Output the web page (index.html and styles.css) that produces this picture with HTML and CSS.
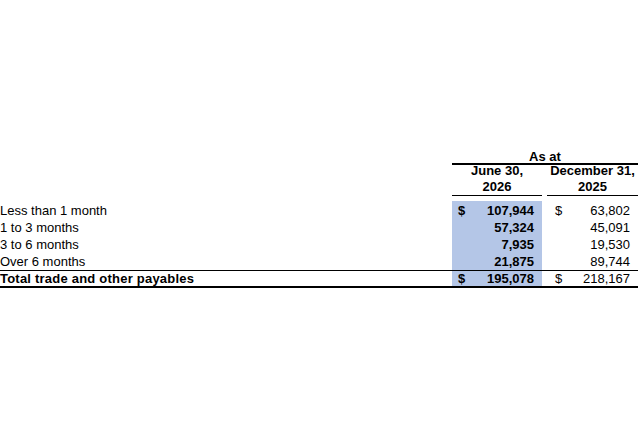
FILE: index.html
```html
<!DOCTYPE html>
<html lang="en">
<head>
<meta charset="utf-8">
<title>Trade and other payables aging</title>
<link rel="stylesheet" href="styles.css">
</head>
<body>
<main class="sheet">
  <div class="row head-top">
    <div class="asat">As at</div>
  </div>
  <div class="row head-cols">
    <div class="hcol june-h">June 30,<br>2026</div>
    <div class="hcol dec-h">December 31,<br>2025</div>
  </div>
  <div class="data">
    <div class="row item first">
      <div class="label">Less than 1 month</div>
      <div class="cell cur"><span class="sym">$</span><span class="num">107,944</span></div>
      <div class="cell prev"><span class="sym">$</span><span class="num">63,802</span></div>
    </div>
    <div class="row item">
      <div class="label">1 to 3 months</div>
      <div class="cell cur"><span class="num">57,324</span></div>
      <div class="cell prev"><span class="num">45,091</span></div>
    </div>
    <div class="row item">
      <div class="label">3 to 6 months</div>
      <div class="cell cur"><span class="num">7,935</span></div>
      <div class="cell prev"><span class="num">19,530</span></div>
    </div>
    <div class="row item">
      <div class="label">Over 6 months</div>
      <div class="cell cur"><span class="num">21,875</span></div>
      <div class="cell prev"><span class="num">89,744</span></div>
    </div>
    <div class="row item total">
      <div class="label">Total trade and other payables</div>
      <div class="cell cur"><span class="sym">$</span><span class="num">195,078</span></div>
      <div class="cell prev"><span class="sym">$</span><span class="num">218,167</span></div>
    </div>
  </div>
</main>
</body>
</html>
```
FILE: styles.css
```css
html, body {
  margin: 0;
  padding: 0;
  background: #ffffff;
}

body {
  font-family: "Liberation Sans", Arial, sans-serif;
  font-size: 13px;
  color: #000000;
}

.sheet {
  width: 638px;
  padding-top: 150px;
}

.row {
  display: grid;
  grid-template-columns: 452px 90px 5px 91px;
}

.head-top {
  height: 13px;
  line-height: 13px;
}

.asat {
  grid-column: 2 / 5;
  text-align: center;
  font-weight: bold;
  border-bottom: 2px solid #000;
}

.head-cols {
  margin-bottom: 5px;
}

.hcol {
  text-align: center;
  font-weight: bold;
  line-height: 16px;
  border-bottom: 1px solid #000;
}

.june-h {
  grid-column: 2;
}

.dec-h {
  grid-column: 4;
}

.item {
  line-height: 17px;
}

.label {
  grid-column: 1;
  white-space: nowrap;
}

.cell {
  display: flex;
  justify-content: space-between;
}

.cell .num {
  margin-left: auto;
}

.cur {
  grid-column: 2;
  background: #b4c6e7;
  font-weight: bold;
  padding: 0 8px 0 6px;
}

.prev {
  grid-column: 4;
  padding: 0 8px;
}

.first .label,
.first .cell {
  padding-top: 1px;
}

.total {
  line-height: 15px;
  border-top: 1px solid #000;
  border-bottom: 2px solid #000;
}

.total .label {
  font-weight: bold;
  letter-spacing: 0.22px;
}
```
